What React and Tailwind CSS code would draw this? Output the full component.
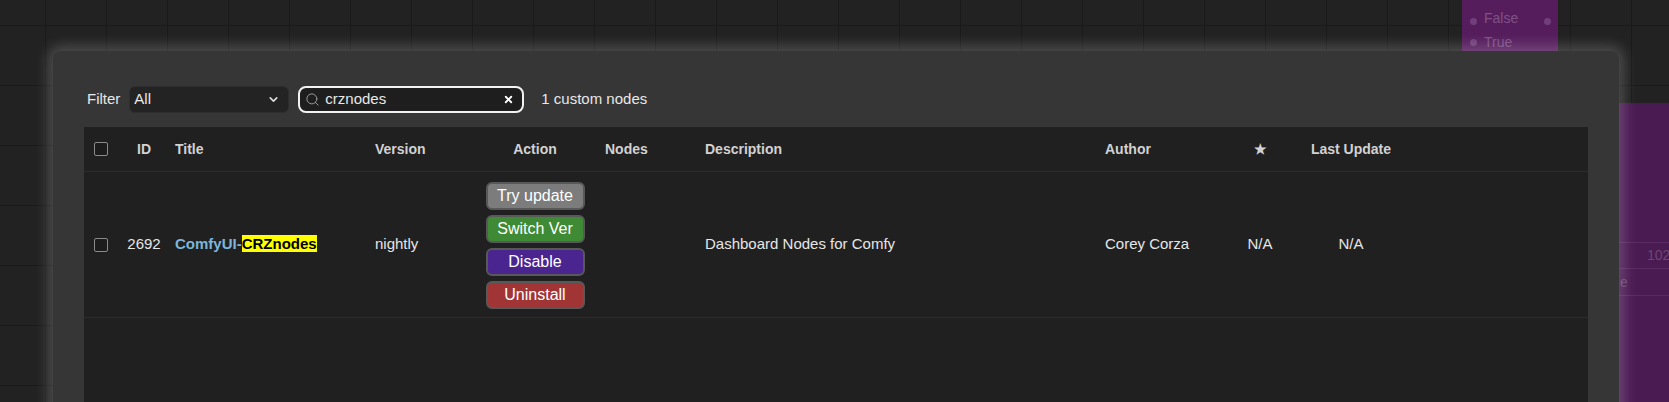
import React from "react";
import { Search, X, ChevronDown } from "lucide-react";

const cols =
  "grid grid-cols-[34px_52px_200px_100px_130px_100px_400px_115px_90px_92px_1fr]";

const Checkbox = () => (
  <div className="ml-[10px] h-[14px] w-[14px] rounded-[2px] border border-[#8a8a8a] bg-[#1c1c1c]" />
);

const ActionButton = ({ label, color }) => (
  <button
    className={`h-[28px] w-[99px] rounded-[6px] border-2 border-[#585858] text-[16px] leading-none text-white ${color}`}
  >
    {label}
  </button>
);

const App = () => {
  return (
    <div className="relative h-[402px] w-[1669px] overflow-hidden bg-[#222222] bg-[linear-gradient(to_right,#1a1a1a_1px,transparent_1px),linear-gradient(to_bottom,#1a1a1a_1px,transparent_1px)] bg-[size:61px_60px] bg-[position:45px_25px] font-['Liberation_Sans',Arial,sans-serif]">
      {/* canvas nodes behind the dialog */}
      <div className="absolute left-[1462px] top-[-4px] h-[160px] w-[96px] rounded-[6px] bg-[#561d5d]">
        <div className="flex h-[29px] items-end gap-[7px] pl-[8px]">
          <span className="h-[7px] w-[7px] rounded-full bg-[#71407a]" />
          <span className="text-[14px] leading-none text-[#7f5186]">False</span>
          <span className="ml-auto mr-[7px] h-[7px] w-[7px] rounded-full bg-[#71407a]" />
        </div>
        <div className="mt-[10px] flex items-center gap-[7px] pl-[8px]">
          <span className="h-[7px] w-[7px] rounded-full bg-[#71407a]" />
          <span className="text-[14px] leading-none text-[#7f5186]">True</span>
        </div>
      </div>
      <div className="absolute left-[1560px] top-[103px] h-[320px] w-[140px] bg-[#4a1a53]">
        <div className="mt-[139px] flex h-[27px] items-center border-y border-[#5a2a62] pl-[87px] text-[14px] text-[#6a4771]">
          102
        </div>
        <div className="flex h-[27px] items-center border-b border-[#5a2a62] pl-[60px] text-[14px] text-[#6a4771]">
          e
        </div>
      </div>

      <div className="relative pl-[53px] pt-[51px]">
        <div className="h-[420px] w-[1566px] rounded-[8px] bg-[#363636] px-[31px] pt-[35px] shadow-[0_0_14px_5px_rgba(255,255,255,0.2)]">
          <div className="flex h-[27px] items-center text-[15px] text-[#e8e8e8]">
            <span className="ml-[3px]">Filter</span>
            <div className="ml-[9px] flex h-[27px] w-[160px] items-center justify-between rounded-[6px] border border-[#2e2e2e] bg-[#232323] pl-[4px] pr-[8px]">
              <span>All</span>
              <ChevronDown size={13} strokeWidth={3} className="text-[#dddddd]" />
            </div>
            <div className="ml-[9px] flex h-[27px] w-[226px] items-center rounded-[8px] border-2 border-[#f2f2f2] bg-[#1e1e1e] pl-[5px] pr-[8px]">
              <Search size={15} strokeWidth={1.6} className="text-[#9a9a9a]" />
              <span className="ml-[5px]">crznodes</span>
              <X size={11} strokeWidth={4} className="ml-auto text-white" />
            </div>
            <span className="ml-[17px]">1 custom nodes</span>
          </div>

          <div className="mt-[14px] h-[300px] w-[1504px] bg-[#202020]">
            <div
              className={`${cols} h-[45px] items-center border-b border-[#2c2c2c] text-[14px] font-bold text-[#d2d2d2]`}
            >
              <Checkbox />
              <span className="text-center">ID</span>
              <span className="pl-[5px]">Title</span>
              <span className="pl-[5px]">Version</span>
              <span className="text-center">Action</span>
              <span className="pl-[5px]">Nodes</span>
              <span className="pl-[5px]">Description</span>
              <span className="pl-[5px]">Author</span>
              <span className="text-center">★</span>
              <span className="text-center">Last Update</span>
              <span />
            </div>

            <div
              className={`${cols} h-[146px] items-center border-b border-[#2c2c2c] text-[15px] text-[#e6e6e6]`}
            >
              <Checkbox />
              <span className="text-center">2692</span>
              <span className="pl-[5px] font-bold text-[#7bb6da]">
                ComfyUI-
                <span className="bg-[#ffff00] text-black">CRZnodes</span>
              </span>
              <span className="pl-[5px]">nightly</span>
              <div className="flex flex-col items-center gap-[5px] pt-[2px]">
                <ActionButton label="Try update" color="bg-[#7c7c7c]" />
                <ActionButton label="Switch Ver" color="bg-[#3f8b35]" />
                <ActionButton label="Disable" color="bg-[#4a2590]" />
                <ActionButton label="Uninstall" color="bg-[#a13536]" />
              </div>
              <span />
              <span className="pl-[5px]">Dashboard Nodes for Comfy</span>
              <span className="pl-[5px]">Corey Corza</span>
              <span className="text-center">N/A</span>
              <span className="text-center">N/A</span>
              <span />
            </div>
          </div>
        </div>
      </div>
    </div>
  );
};

export default App;
